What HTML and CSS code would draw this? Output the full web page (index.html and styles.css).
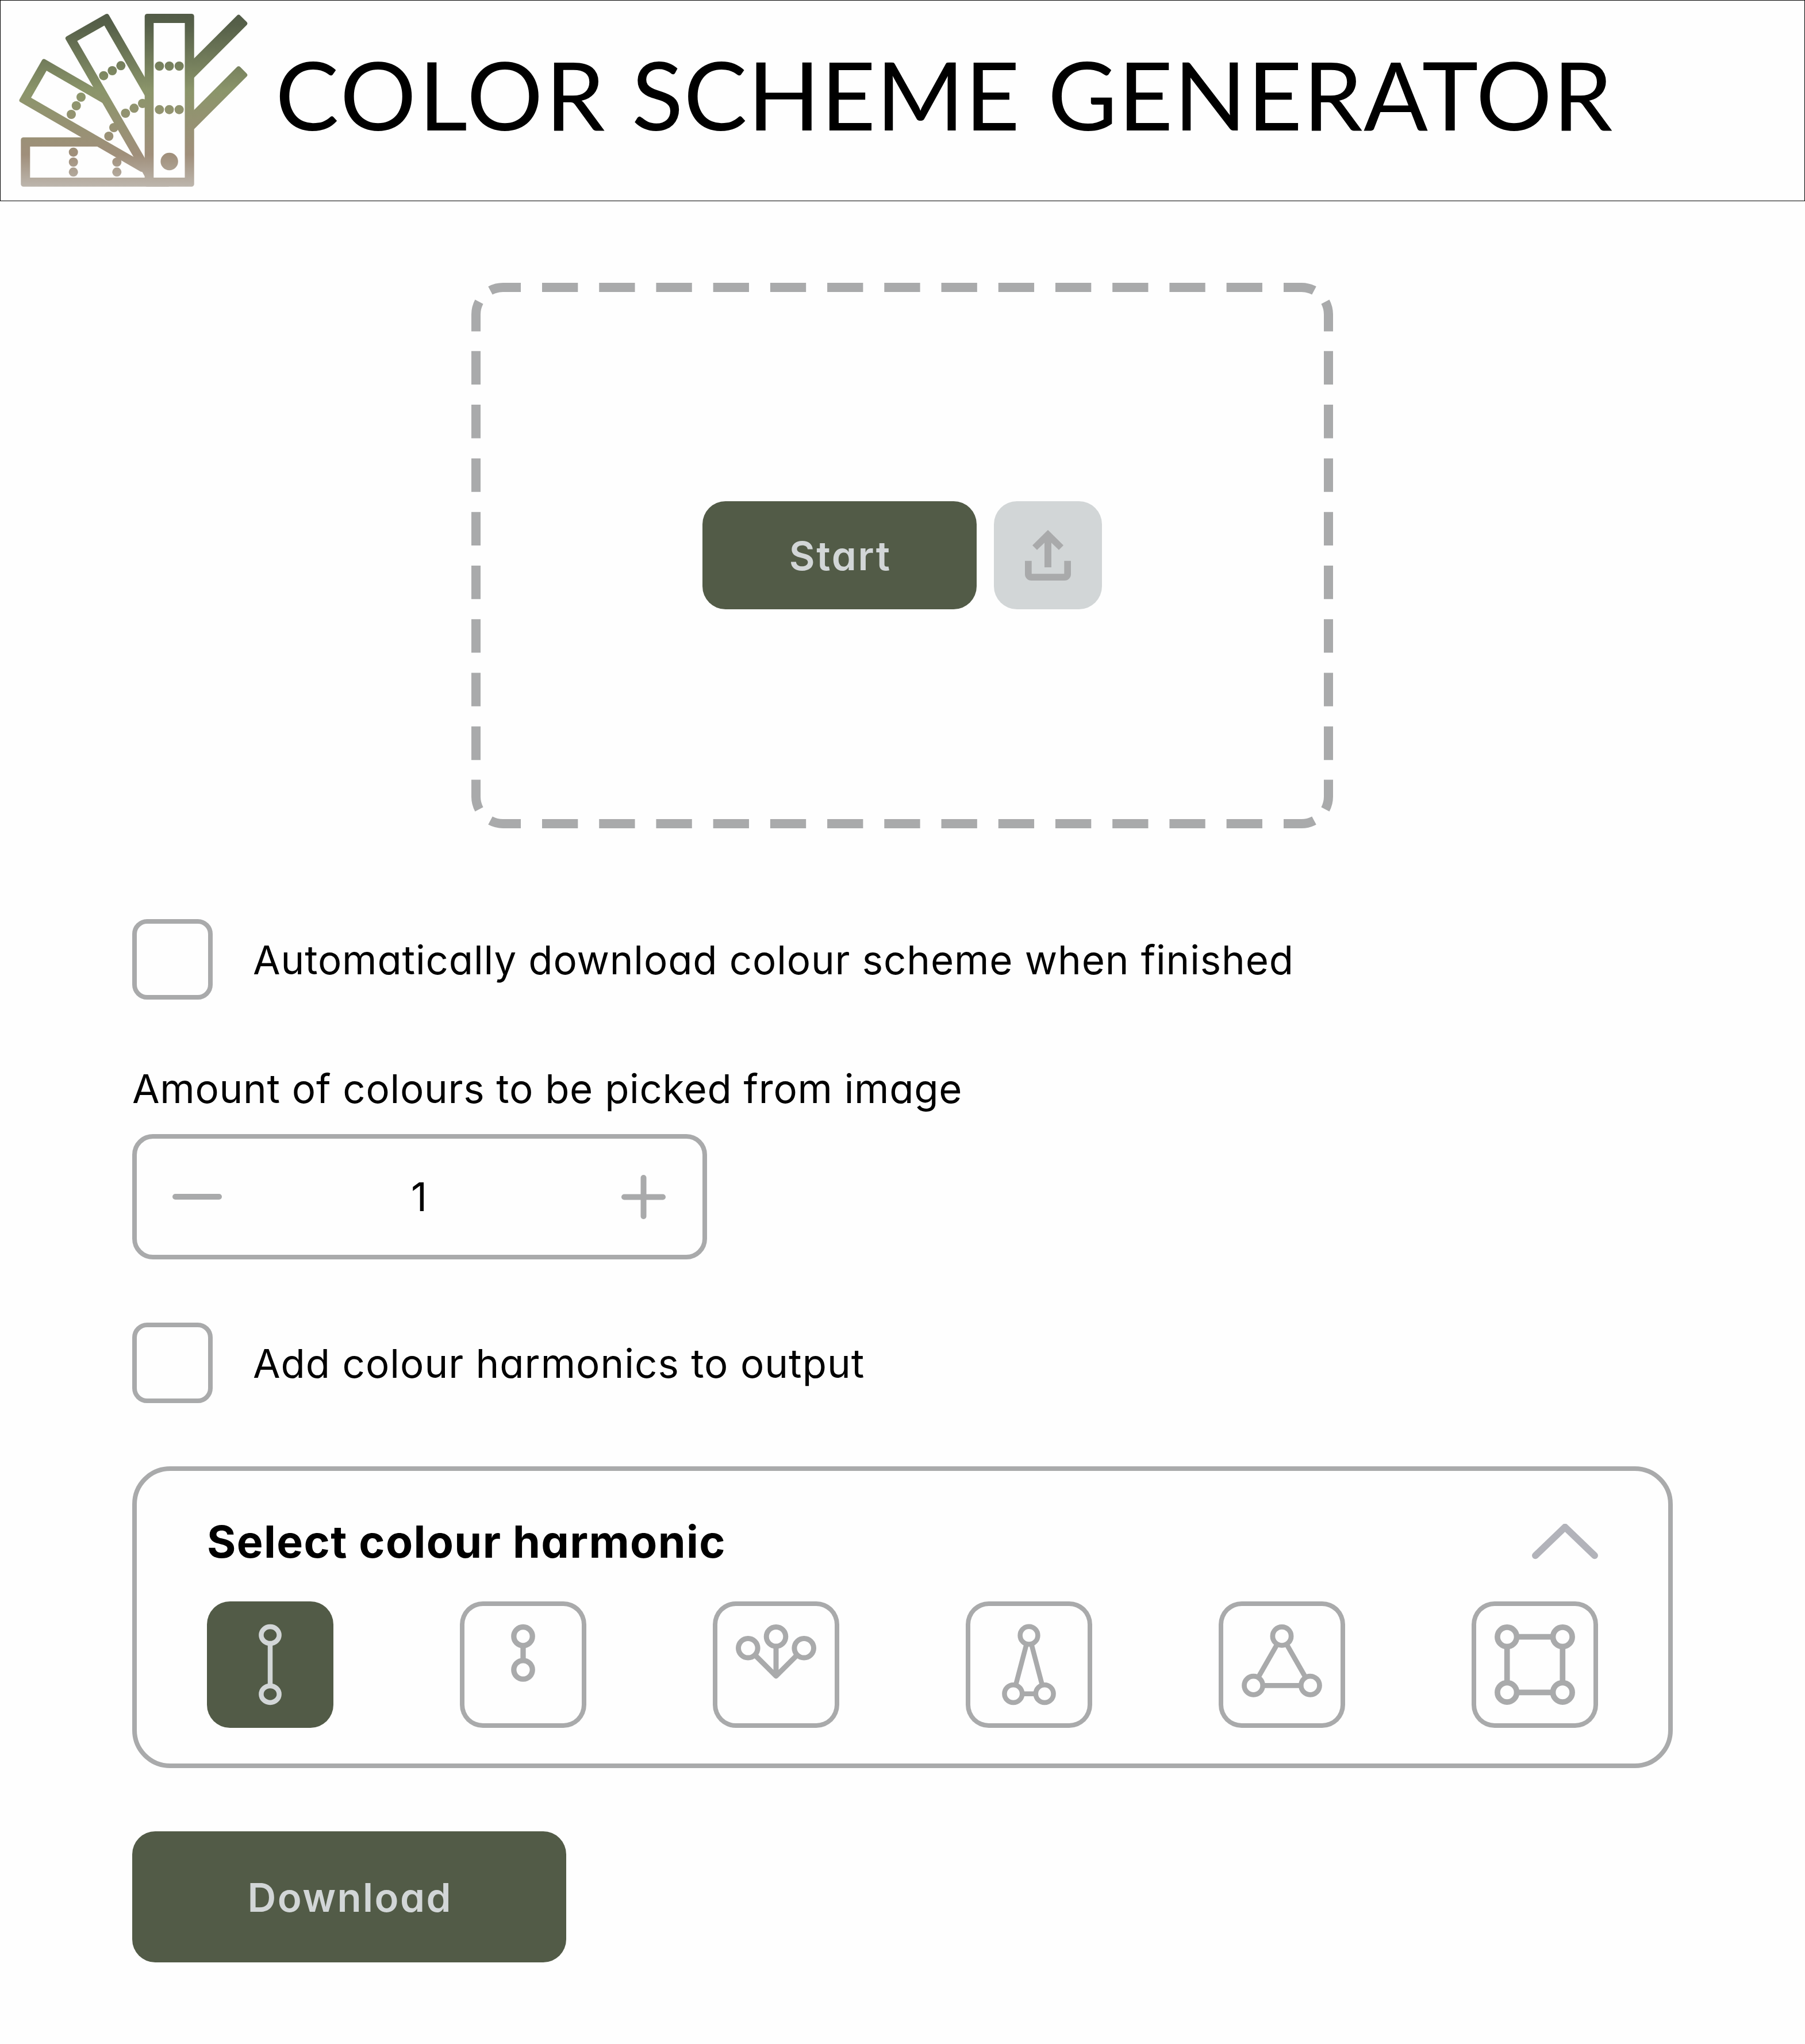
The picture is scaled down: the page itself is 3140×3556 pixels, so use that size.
FILE: index.html
```html
<!DOCTYPE html>
<html lang="en">
<head>
<meta charset="utf-8">
<title>Color Scheme Generator</title>
<link rel="stylesheet" href="styles.css">
</head>
<body>
<header class="header">
  <svg class="logo" viewBox="0 0 440 348" aria-hidden="true">
    <defs>
      <linearGradient id="swatch" gradientUnits="userSpaceOnUse" x1="0" y1="23" x2="0" y2="323.7">
        <stop offset="0" stop-color="#525b47"/>
        <stop offset=".07" stop-color="#566049"/>
        <stop offset=".45" stop-color="#8b956a"/>
        <stop offset=".82" stop-color="#a08f7b"/>
        <stop offset="1" stop-color="#bcb5ac"/>
      </linearGradient>
    </defs>
    <g transform="translate(-1 -1)" fill="url(#swatch)" stroke-linejoin="round">
      <!-- horizontal card -->
      <rect x="36.3" y="239" width="260" height="85.7" rx="4.5"/>
      <rect class="paper" x="52.3" y="255" width="205" height="54"/>
      <circle cx="127.7" cy="264.7" r="8"/><circle cx="127.7" cy="282" r="8"/><circle cx="127.7" cy="299.3" r="8"/>
      <circle cx="203.3" cy="282" r="8"/><circle cx="203.3" cy="299.3" r="8"/>
      <!-- 60 degree card -->
      <path stroke="url(#swatch)" stroke-width="8" d="M76.6 106.6 37.6 174.4 246 294.7V204.4Z"/>
      <path class="paper" d="M81 123 54 170 250 283.1V220.6Z"/>
      <circle cx="141" cy="169" r="8"/><circle cx="132.7" cy="184" r="8"/><circle cx="124" cy="199" r="8"/>
      <circle cx="198" cy="222" r="8"/><circle cx="189.3" cy="237" r="8"/>
      <!-- 30 degree card -->
      <path stroke="url(#swatch)" stroke-width="8" d="M185.9 28.1 117.9 66.8 258.3 310H276V184Z"/>
      <path class="paper" d="M181.5 44.5 134.3 71.2 256 282V173.5Z"/>
      <circle cx="210.3" cy="114.3" r="8"/><circle cx="195.3" cy="123" r="8"/><circle cx="180.3" cy="131.7" r="8"/>
      <circle cx="248" cy="180" r="8"/><circle cx="233.3" cy="188.3" r="8"/><circle cx="218.3" cy="197" r="8"/>
      <!-- cards fanned behind on the right -->
      <path stroke="url(#swatch)" stroke-width="8" d="M415.1 29.8 426.2 40.9 330 137.1V114.9Z"/>
      <path stroke="url(#swatch)" stroke-width="8" d="M415.1 119.4 426.2 130.5 330 226.7V204.5Z"/>
      <!-- vertical card -->
      <rect x="251.7" y="24" width="86" height="300.7" rx="4.5"/>
      <rect class="paper" x="267.3" y="40" width="54.2" height="269"/>
      <circle cx="277.3" cy="115" r="8"/><circle cx="294.5" cy="115" r="8"/><circle cx="311.7" cy="115" r="8"/>
      <circle cx="277.3" cy="190.7" r="8"/><circle cx="294.5" cy="190.7" r="8"/><circle cx="311.7" cy="190.7" r="8"/>
      <circle cx="294.6" cy="281" r="15.2"/>
    </g>
  </svg>
  <h1 class="title"><span class="word-a">COLOR</span> <span class="word-b">SCHEME</span> <span class="word-c">GENERATOR</span></h1>
</header>

<main class="main">
  <section class="dropzone">
    <svg class="dashes" viewBox="0 0 1499 949" aria-hidden="true">
      <defs>
        <path id="corner" d="M86 8H55A47 47 0 0 0 33 13.5M8 84.5V55A47 47 0 0 1 13.5 33"/>
      </defs>
      <path stroke-dasharray="62.3 36.92" d="M123 8H1376.5M123 941H1376.5"/>
      <path stroke-dasharray="58.3 34.99" d="M8 118.8V831M1491 118.8V831"/>
      <use href="#corner"/>
      <use href="#corner" transform="translate(1499 0) scale(-1 1)"/>
      <use href="#corner" transform="translate(0 949) scale(1 -1)"/>
      <use href="#corner" transform="translate(1499 949) scale(-1 -1)"/>
    </svg>
    <button class="btn btn-start">Start</button>
    <button class="btn btn-upload" aria-label="Upload">
      <svg viewBox="0 0 188 188" aria-hidden="true">
        <path d="M94 50 121 76.7 113 84.7 100 72.3V115H88V72.3L75 84.7 67 76.7Z"/>
        <path d="M54 103.7H65.7V126.3H122.3V103.7H134V127A11 11 0 0 1 123 138H65A11 11 0 0 1 54 127Z"/>
      </svg>
    </button>
  </section>

  <label class="check check-auto"><input type="checkbox" class="box"><span class="check-text">Automatically download colour scheme when finished</span></label>

  <div class="amount">
    <div class="amount-label">Amount of colours to be picked from image</div>
    <div class="stepper">
      <svg class="minus" viewBox="0 0 86 10" aria-hidden="true"><rect width="86" height="10" rx="5"/></svg>
      <span class="count">1</span>
      <svg class="plus" viewBox="0 0 77 77" aria-hidden="true"><rect y="33.5" width="77" height="10" rx="5"/><rect x="33.5" width="10" height="77" rx="5"/></svg>
    </div>
  </div>

  <label class="check check-harmonics"><input type="checkbox" class="box"><span class="check-text">Add colour harmonics to output</span></label>

  <section class="panel">
    <div class="panel-head">
      <h2 class="panel-title">Select colour harmonic</h2>
      <svg class="chevron" viewBox="0 0 115 64" aria-hidden="true"><path d="M6 55.3 57.5 5.7 109 55.3"/></svg>
    </div>
    <div class="harmonics">
      <button class="tile tile-active" aria-label="Complementary">
        <svg viewBox="0 0 220 220"><g stroke-width="8.5"><path d="M110 73V147"/><ellipse cx="110" cy="58.6" rx="15.6" ry="14.5"/><ellipse cx="110" cy="161.4" rx="15.6" ry="14.5"/></g></svg>
      </button>
      <button class="tile" aria-label="Analogous pair">
        <svg viewBox="0 0 220 220"><g stroke-width="9.3"><path d="M110 77V103"/><circle cx="110" cy="60.7" r="16.2"/><circle cx="110" cy="119" r="16.2"/></g></svg>
      </button>
      <button class="tile" aria-label="Analogous">
        <svg viewBox="0 0 220 220"><g stroke-width="9"><path d="M73.3 93.2 110 129.9 146.7 93.2M110 78V129.9"/><circle cx="61.3" cy="81.2" r="16.8"/><circle cx="110" cy="61.2" r="16.8"/><circle cx="158.7" cy="81.2" r="16.8"/></g></svg>
      </button>
      <button class="tile" aria-label="Split complementary">
        <svg viewBox="0 0 220 220"><g stroke-width="8.5"><path d="M105.7 74.4 87 145.5M114.3 74.4 133 145.5M98.5 160.7H121.5"/><circle cx="110" cy="59.2" r="15.4"/><circle cx="82.8" cy="160.7" r="15.4"/><circle cx="137.2" cy="160.7" r="15.4"/></g></svg>
      </button>
      <button class="tile" aria-label="Triadic">
        <svg viewBox="0 0 220 220"><g stroke-width="8.7"><path d="M101.9 74.4 68.7 132.3M118.1 74.4 151.3 132.3M77 146.3H143"/><circle cx="110" cy="60.4" r="16.1"/><circle cx="60.6" cy="146.3" r="16.1"/><circle cx="159.4" cy="146.3" r="16.1"/></g></svg>
      </button>
      <button class="tile" aria-label="Square">
        <svg viewBox="0 0 220 220"><g stroke-width="9.7"><path d="M79 61.7H141M79 158.3H141M61.7 79V141M158.3 79V141"/><circle cx="61.7" cy="61.7" r="16.8"/><circle cx="158.3" cy="61.7" r="16.8"/><circle cx="61.7" cy="158.3" r="16.8"/><circle cx="158.3" cy="158.3" r="16.8"/></g></svg>
      </button>
    </div>
  </section>

  <button class="btn btn-download">Download</button>
</main>
</body>
</html>
```
FILE: styles.css
```css
:root {
  --paper: #fefefe;
  --grey: #a9aaab;
  --mist: #d2d6d7;
  --olive: #525b47;
}

* { box-sizing: border-box; }

body {
  margin: 0;
  background: var(--paper);
  color: #000;
  font-family: "Inter", "Open Sans", sans-serif;
  font-size: 69px;
  font-weight: 400;
  font-feature-settings: "cv11";
  line-height: 84px;
}

svg { display: block; }
button { padding: 0; border: 0; font: inherit; font-feature-settings: inherit; }

.header {
  display: flex;
  align-items: flex-start;
  height: 350px;
  border: 1px solid #000;
}
.logo { flex: none; width: 440px; height: 348px; }
.logo .paper { fill: var(--paper); }

.title {
  display: flex;
  gap: 42px;
  margin: 61.5px 0 0 38px;
  font-family: "Lato", "Open Sans", sans-serif;
  font-size: 165.6px;
  font-weight: 400;
  line-height: 200px;
  white-space: nowrap;
}
.word-a { letter-spacing: 4.2px; }
.word-b { letter-spacing: .7px; }
.word-c { margin-left: 6px; letter-spacing: 1.35px; }

.main {
  display: flex;
  flex-direction: column;
  align-items: flex-start;
  padding: 141.5px 230px 142px;
}

.dropzone {
  position: relative;
  display: flex;
  align-self: center;
  align-items: center;
  justify-content: center;
  gap: 30px;
  width: 1499px;
  height: 949px;
  margin-right: 1px;
}
.dashes {
  position: absolute;
  inset: 0;
  width: 100%;
  height: 100%;
  fill: none;
  stroke: var(--grey);
  stroke-width: 16;
}

.btn {
  padding-top: 2px;
  border-radius: 40px;
  background: var(--olive);
  color: var(--mist);
  font-weight: 600;
}
.btn-start { width: 477px; height: 188px; letter-spacing: 2.7px; text-indent: 2.7px; }
.btn-upload { width: 188px; height: 188px; padding: 0; background: var(--mist); fill: var(--grey); }
.btn-download { width: 755px; height: 228px; margin-top: 110px; letter-spacing: 2.4px; text-indent: 2.4px; }

.check { display: flex; align-items: center; gap: 70px; white-space: nowrap; }
.check-text { padding-top: 2px; }
.check-auto { margin-top: 158.5px; letter-spacing: .86px; }
.check-harmonics { margin-top: 110px; letter-spacing: 1px; }
.box {
  appearance: none;
  width: 140px;
  height: 140px;
  margin: 0;
  border: 8px solid var(--grey);
  border-radius: 26px;
}

.amount { margin-top: 113px; }
.amount-label { letter-spacing: .7px; white-space: nowrap; }
.stepper {
  display: flex;
  align-items: center;
  justify-content: space-between;
  width: 1000px;
  height: 218px;
  margin-top: 37px;
  padding: 0 64px 0 62px;
  border: 8px solid var(--grey);
  border-radius: 36px;
  fill: var(--grey);
}
.minus { width: 86px; height: 10px; }
.count { margin-right: 9px; }
.plus { width: 77px; height: 77px; }

.panel {
  width: 2680px;
  height: 525px;
  margin-top: 110px;
  padding: 77px 122px 0;
  border: 8px solid var(--grey);
  border-radius: 66px;
}
.panel-head { display: flex; align-items: center; justify-content: space-between; height: 93px; }
.panel-title { margin: 0; font-size: 77px; font-weight: 700; letter-spacing: 1.36px; line-height: 93px; }
.chevron {
  width: 115px;
  height: 64px;
  fill: none;
  stroke: #b2b3ba;
  stroke-width: 12;
  stroke-linecap: round;
  stroke-linejoin: round;
}

.harmonics { display: flex; justify-content: space-between; margin-top: 57px; }
.tile {
  width: 220px;
  height: 220px;
  border-radius: 40px;
  background: none;
  box-shadow: inset 0 0 0 8px var(--grey);
  fill: none;
  stroke: var(--grey);
  stroke-linejoin: round;
}
.tile-active { background: var(--olive); box-shadow: none; stroke: var(--mist); }
```
